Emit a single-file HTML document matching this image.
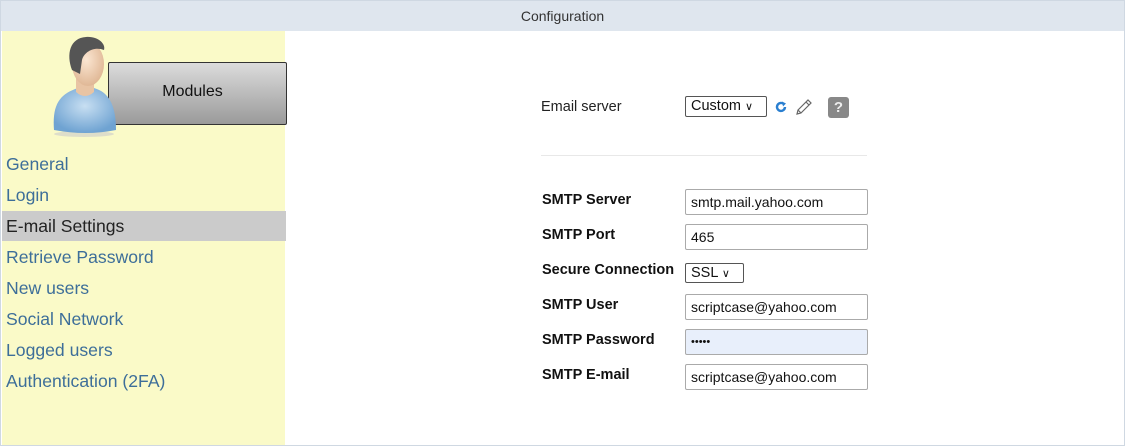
<!DOCTYPE html>
<html><head><style>
body{margin:0;width:1125px;height:446px;font-family:"Liberation Sans",Arial,sans-serif;background:#fff;position:relative;overflow:hidden}
.frame{position:absolute;left:0;top:0;width:1123px;height:444px;border:1px solid #cfd8e2}
.hdr{position:absolute;left:1px;top:1px;width:1123px;height:30px;background:#dfe6ee;text-align:center;line-height:31px;font-size:14px;color:#333}
.side{position:absolute;left:2px;top:31px;width:283px;height:414px;background:#fafac8}
.mod{position:absolute;left:108px;top:62px;width:179px;height:63px;border:1px solid #333;background:linear-gradient(#dcdcdc,#9a9a9a);box-sizing:border-box;border-radius:2px;text-align:center;line-height:58px;font-size:16px;color:#111;padding-right:10px}
.m{position:absolute;left:2px;width:284px;height:30px;line-height:30px;font-size:17.6px;color:#3d6e99;padding-left:4px;box-sizing:border-box}
.lbl{position:absolute;left:542px;font-size:14.5px;font-weight:bold;color:#111}
.inp{position:absolute;left:685px;width:183px;height:26px;border:1px solid #aaa;box-sizing:border-box;font-size:14px;line-height:24px;padding-left:5px;color:#111;border-radius:2px}
.sel{position:absolute;border:1px solid #555;box-sizing:border-box;font-size:14.5px;color:#111;border-radius:2px;padding-left:5px}
</style></head><body>
<div class="frame"></div>
<div class="hdr">Configuration</div>
<div class="side"></div>
<div class="mod">Modules</div>
<svg style="position:absolute;left:50px;top:34px" width="72" height="104" viewBox="0 0 72 104">
<defs><radialGradient id="b" cx="50%" cy="40%" r="60%"><stop offset="0" stop-color="#c8dff2"/><stop offset="1" stop-color="#6fa3d2"/></radialGradient>
<radialGradient id="f" cx="45%" cy="40%" r="60%"><stop offset="0" stop-color="#fbe6d2"/><stop offset="1" stop-color="#e0b896"/></radialGradient></defs>
<ellipse cx="34" cy="100" rx="30" ry="3" fill="#ccc" opacity=".6"/>
<path d="M4 96 C2 70 10 60 28 54 L44 54 C58 58 66 70 66 96 Q36 102 4 96Z" fill="url(#b)"/>
<path d="M26 44 L26 58 Q35 66 44 58 L44 44Z" fill="#e8c4a4"/>
<ellipse cx="38" cy="30" rx="16" ry="22" fill="url(#f)"/>
<path d="M22 36 C16 20 20 4 36 3 C48 2 56 10 54 16 C44 12 34 18 32 26 L30 40 Z" fill="#555"/>
</svg>
<div class="m" style="top:149px">General</div>
<div class="m" style="top:180px">Login</div>
<div class="m" style="top:211px;background:#cbcbcb;color:#222">E-mail Settings</div>
<div class="m" style="top:242px">Retrieve Password</div>
<div class="m" style="top:273px">New users</div>
<div class="m" style="top:304px">Social Network</div>
<div class="m" style="top:335px">Logged users</div>
<div class="m" style="top:366px">Authentication (2FA)</div>

<div style="position:absolute;left:541px;top:99px;font-size:14.5px;color:#222">Email server</div>
<div class="sel" style="left:685px;top:96px;width:82px;height:21px;line-height:19px">Custom <span style="font-size:11px">&#x2228;</span></div>
<svg style="position:absolute;left:774px;top:100px" width="14" height="14" viewBox="0 0 14 14"><path d="M11 7A4 4 0 1 1 9.5 3.8" fill="none" stroke="#2a7fd0" stroke-width="2.4"/><path d="M8 1.5L12 3.5 9 6.5Z" fill="#2a7fd0"/></svg>
<svg style="position:absolute;left:794px;top:97px" width="20" height="20" viewBox="0 0 20 20"><path d="M3 17L4 13 14 3 17 6 7 16Z M4 13L7 16 M12 5L15 8" fill="none" stroke="#666" stroke-width="1.2"/></svg>
<div style="position:absolute;left:828px;top:97px;width:21px;height:21px;background:#888;border-radius:3px;color:#eee;font-weight:bold;font-size:15px;text-align:center;line-height:21px">?</div>
<div style="position:absolute;left:541px;top:155px;width:326px;height:1px;background:#e8e8e8"></div>

<div class="lbl" style="top:192px">SMTP Server</div><div class="inp" style="top:189px">smtp.mail.yahoo.com</div>
<div class="lbl" style="top:227px">SMTP Port</div><div class="inp" style="top:224px">465</div>
<div class="lbl" style="top:262px">Secure Connection</div><div class="sel" style="left:685px;top:263px;width:59px;height:20px;line-height:18px">SSL <span style="font-size:11px">&#x2228;</span></div>
<div class="lbl" style="top:297px">SMTP User</div><div class="inp" style="top:294px">scriptcase@yahoo.com</div>
<div class="lbl" style="top:332px">SMTP Password</div><div class="inp" style="top:329px;background:#e8effb;font-size:11px">&#8226;&#8226;&#8226;&#8226;&#8226;</div>
<div class="lbl" style="top:367px">SMTP E-mail</div><div class="inp" style="top:364px">scriptcase@yahoo.com</div>
</body></html>
